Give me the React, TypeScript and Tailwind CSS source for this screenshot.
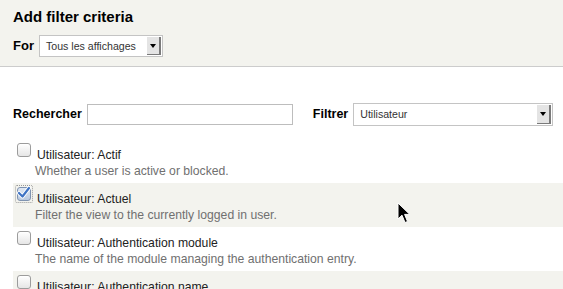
import React from 'react';

type Item = { label: string; desc: string; checked?: boolean };

const items: Item[] = [
  { label: 'Utilisateur: Actif', desc: 'Whether a user is active or blocked.' },
  { label: 'Utilisateur: Actuel', desc: 'Filter the view to the currently logged in user.', checked: true },
  { label: 'Utilisateur: Authentication module', desc: 'The name of the module managing the authentication entry.' },
  { label: 'Utilisateur: Authentication name', desc: 'The unique ID for the user in the external authentication source.' },
];

function SelectBox({ value, className }: { value: string; className: string }) {
  return (
    <div className={`flex border border-[#c4c4c4] bg-white ${className}`}>
      <span className="flex-1 pl-[6px] text-[10.6px] leading-none text-[#333] flex items-center">{value}</span>
      <span className="w-[14px] my-[1px] mr-[1px] bg-[#e4e4e4] border-r-2 border-b border-[#7a7a7a] flex items-center justify-center">
        <span className="w-0 h-0 border-l-[3px] border-r-[3px] border-t-[4px] border-l-transparent border-r-transparent border-t-black" />
      </span>
    </div>
  );
}

function Checkbox({ checked }: { checked?: boolean }) {
  if (checked) {
    return (
      <span className="relative shrink-0 w-[14px] h-[14px]">
        <span className="absolute -inset-[2px] border border-dotted border-[#999] rounded-[2px]" />
        <span className="absolute inset-0 rounded-[3px] border border-[#7f93b0] bg-gradient-to-b from-[#dfe8f4] to-[#b9c9de]" />
        <svg className="absolute -left-[1px] -top-[2px]" width="16" height="15" viewBox="0 0 16 15">
          <path d="M3 8 L6.5 11.5 L13 3" fill="none" stroke="#fff" strokeWidth="4" strokeLinecap="round" strokeLinejoin="round" />
          <path d="M3 8 L6.5 11.5 L13 3" fill="none" stroke="#3d73c4" strokeWidth="2.2" strokeLinecap="round" strokeLinejoin="round" />
        </svg>
      </span>
    );
  }
  return (
    <span className="shrink-0 w-[14px] h-[14px] rounded-[3px] border border-[#9c9c9c] bg-gradient-to-b from-white to-[#e6e6e6] shadow-[inset_0_1px_0_#fff]" />
  );
}

export default function App() {
  return (
    <div className="relative w-[563px] h-[289px] overflow-hidden bg-white font-['Liberation_Sans',Arial,sans-serif] text-[#222]">
      <div className="h-[67px] bg-[#f3f3ee] border-b border-[#cccccc] px-[13px] pt-[8px]">
        <h2 className="text-[15px] font-bold leading-[18px] text-black">Add filter criteria</h2>
        <div className="flex items-center gap-[5px] mt-[9px]">
          <span className="text-[13px] font-bold text-black">For</span>
          <SelectBox value="Tous les affichages" className="w-[124px] h-[22px]" />
        </div>
      </div>

      <div className="pl-[13px] pt-[36px]">
        <div className="flex items-center h-[23px]">
          <span className="text-[12.5px] font-bold text-black">Rechercher</span>
          <div className="ml-[5px] w-[206px] h-[21px] border border-[#bdbdbd] bg-white" />
          <span className="ml-[20px] text-[12.5px] font-bold text-black">Filtrer</span>
          <SelectBox value="Utilisateur" className="ml-[5px] w-[200px] h-[23px]" />
        </div>

        <div className="mt-[13px]">
          {items.map((it, i) => (
            <div key={it.label} className={`h-[44px] pl-[4px] pt-[4px] ${i % 2 === 1 ? 'bg-[#f3f3ee]' : 'bg-white'}`}>
              <div className="flex items-start">
                <Checkbox checked={it.checked} />
                <span className="ml-[6px] mt-[3.5px] text-[12.2px] leading-[16.5px] text-[#222]">{it.label}</span>
              </div>
              <div className="pl-[18px] text-[12.2px] leading-[16.5px] text-[#707070]">{it.desc}</div>
            </div>
          ))}
        </div>
      </div>

      <svg className="absolute left-[397px] top-[202px]" width="14" height="22" viewBox="0 0 14 22">
        <path d="M1 1 L1 17 L5 13.2 L8 20.5 L10.5 19.5 L7.6 12.4 L12.8 12.4 Z" fill="#000" stroke="#fff" strokeWidth="1" strokeLinejoin="round" />
      </svg>
    </div>
  );
}
